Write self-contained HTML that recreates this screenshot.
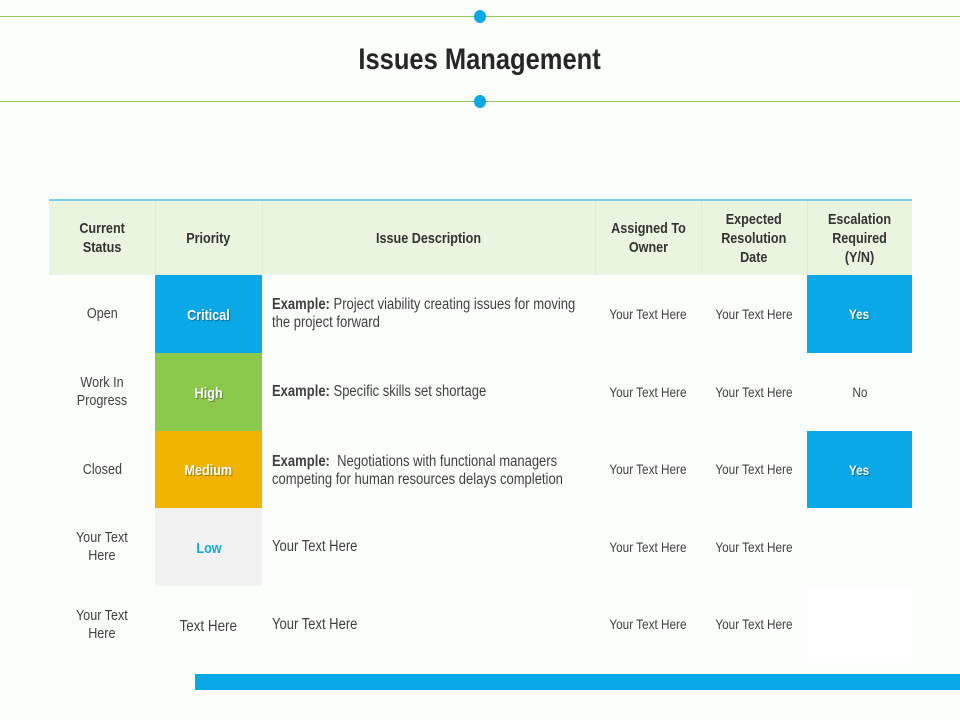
<!DOCTYPE html>
<html><head><meta charset="utf-8"><style>
*{margin:0;padding:0;box-sizing:border-box}
body{width:960px;height:720px;background:#fcfefc;position:relative;overflow:hidden;font-family:"Liberation Sans",sans-serif;color:#404040}
.a{position:absolute}
.c{position:absolute;display:flex;align-items:center;justify-content:center;text-align:center}
.c span,.l span{display:inline-block;transform:scaleX(0.84);transform-origin:center}
.l{position:absolute;display:flex;align-items:center;justify-content:flex-start}
.l span{transform-origin:left center;white-space:nowrap}
.h{font-weight:bold;font-size:15px;line-height:19px;color:#333}
.t{font-size:15px;line-height:18px}
.d{font-size:15.5px;line-height:18px}
.s{font-size:14px;line-height:17px}
.w{color:#fff;font-weight:bold;font-size:15px;text-shadow:1px 1px 1px rgba(0,0,0,.4)}
</style></head><body>
<div class="a" style="left:0;top:16px;width:960px;height:1px;background:#92c860"></div>
<div class="a" style="left:474px;top:10px;width:12px;height:13px;border-radius:50%;background:#0aa8e6"></div>
<div class="a" style="left:0;top:101px;width:960px;height:1px;background:#92c860"></div>
<div class="a" style="left:474px;top:95px;width:12px;height:13px;border-radius:50%;background:#0aa8e6"></div>
<div class="c" style="left:0;top:42px;width:960px;height:36px;font-size:30px;font-weight:bold;color:#262626"><span style="transform:scaleX(0.85)">Issues Management</span></div>

<div class="a" style="left:49px;top:199px;width:863px;height:2px;background:#7fcbe8"></div>
<div class="a" style="left:49px;top:201px;width:863px;height:74px;background:#e9f5de"></div>
<div class="a" style="left:155px;top:201px;width:1px;height:74px;background:#dfeed2"></div>
<div class="a" style="left:262px;top:201px;width:1px;height:74px;background:#dfeed2"></div>
<div class="a" style="left:595px;top:201px;width:1px;height:74px;background:#dfeed2"></div>
<div class="a" style="left:701px;top:201px;width:1px;height:74px;background:#dfeed2"></div>
<div class="a" style="left:807px;top:201px;width:1px;height:74px;background:#dfeed2"></div>
<div class="c h" style="left:49px;top:201px;width:106px;height:74px"><span>Current<br>Status</span></div>
<div class="c h" style="left:155px;top:201px;width:107px;height:74px"><span>Priority</span></div>
<div class="c h" style="left:262px;top:201px;width:333px;height:74px"><span>Issue Description</span></div>
<div class="c h" style="left:595px;top:201px;width:106px;height:74px"><span>Assigned To<br>Owner</span></div>
<div class="c h" style="left:701px;top:201px;width:106px;height:74px"><span>Expected<br>Resolution<br>Date</span></div>
<div class="c h" style="left:807px;top:201px;width:105px;height:74px"><span>Escalation<br>Required<br>(Y/N)</span></div>

<div class="a" style="left:155px;top:275px;width:107px;height:78px;background:#0aa8e6"></div>
<div class="a" style="left:155px;top:353px;width:107px;height:78px;background:#8cc84b"></div>
<div class="a" style="left:155px;top:431px;width:107px;height:77px;background:#f0b400"></div>
<div class="a" style="left:155px;top:508px;width:107px;height:78px;background:#f2f2f2"></div>
<div class="a" style="left:807px;top:275px;width:105px;height:78px;background:#0aa8e6"></div>
<div class="a" style="left:807px;top:431px;width:105px;height:77px;background:#0aa8e6"></div>
<div class="a" style="left:807px;top:586px;width:105px;height:77px;background:#ffffff"></div>

<div class="c t" style="left:49px;top:275px;width:106px;height:78px"><span>Open</span></div>
<div class="c t" style="left:49px;top:353px;width:106px;height:78px"><span>Work In<br>Progress</span></div>
<div class="c t" style="left:49px;top:431px;width:106px;height:77px"><span>Closed</span></div>
<div class="c t" style="left:49px;top:508px;width:106px;height:78px"><span>Your Text<br>Here</span></div>
<div class="c t" style="left:49px;top:586px;width:106px;height:77px"><span>Your Text<br>Here</span></div>

<div class="c w" style="left:155px;top:275px;width:107px;height:80px"><span>Critical</span></div>
<div class="c w" style="left:155px;top:353px;width:107px;height:80px"><span>High</span></div>
<div class="c w" style="left:155px;top:431px;width:107px;height:79px"><span>Medium</span></div>
<div class="c" style="left:155px;top:508px;width:107px;height:81px;color:#0aa8e6;font-weight:bold;font-size:15px"><span>Low</span></div>
<div class="c" style="left:155px;top:586px;width:107px;height:81px;font-size:16px"><span>Text Here</span></div>

<div class="l d" style="left:272px;top:275px;width:330px;height:78px"><span><b>Example:</b> Project viability creating issues for moving<br>the project forward</span></div>
<div class="l d" style="left:272px;top:353px;width:330px;height:78px"><span><b>Example:</b> Specific skills set shortage</span></div>
<div class="l d" style="left:272px;top:431px;width:330px;height:77px;margin-top:1px"><span><b>Example:</b>&nbsp; Negotiations with functional managers<br>competing for human resources delays completion</span></div>
<div class="l d" style="left:272px;top:508px;width:330px;height:78px"><span>Your Text Here</span></div>
<div class="l d" style="left:272px;top:586px;width:330px;height:77px"><span>Your Text Here</span></div>

<div class="c s" style="left:595px;top:275px;width:106px;height:78px"><span>Your Text Here</span></div>
<div class="c s" style="left:595px;top:353px;width:106px;height:78px"><span>Your Text Here</span></div>
<div class="c s" style="left:595px;top:431px;width:106px;height:77px"><span>Your Text Here</span></div>
<div class="c s" style="left:595px;top:508px;width:106px;height:78px"><span>Your Text Here</span></div>
<div class="c s" style="left:595px;top:586px;width:106px;height:77px"><span>Your Text Here</span></div>
<div class="c s" style="left:701px;top:275px;width:106px;height:78px"><span>Your Text Here</span></div>
<div class="c s" style="left:701px;top:353px;width:106px;height:78px"><span>Your Text Here</span></div>
<div class="c s" style="left:701px;top:431px;width:106px;height:77px"><span>Your Text Here</span></div>
<div class="c s" style="left:701px;top:508px;width:106px;height:78px"><span>Your Text Here</span></div>
<div class="c s" style="left:701px;top:586px;width:106px;height:77px"><span>Your Text Here</span></div>

<div class="c w" style="left:807px;top:275px;width:105px;height:78px;font-size:14px"><span>Yes</span></div>
<div class="c s" style="left:807px;top:353px;width:105px;height:78px"><span>No</span></div>
<div class="c w" style="left:807px;top:431px;width:105px;height:77px;font-size:14px"><span>Yes</span></div>

<div class="a" style="left:195px;top:674px;width:765px;height:16px;background:#0aa8e6"></div>
</body></html>
